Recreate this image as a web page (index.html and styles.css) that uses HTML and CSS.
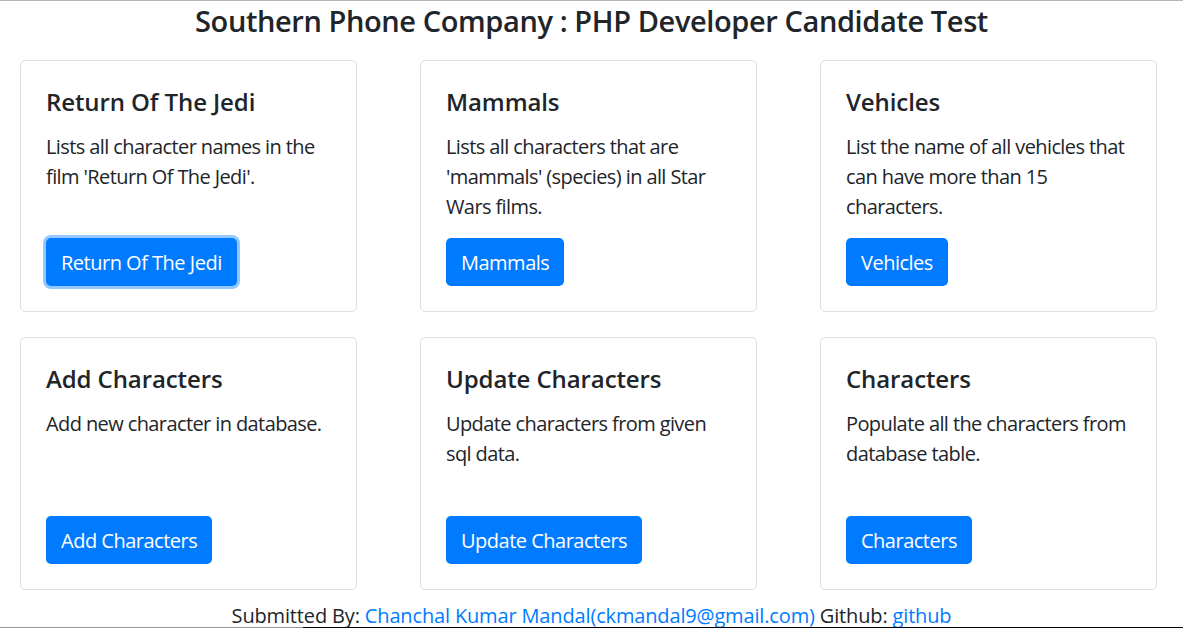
FILE: index.html
```html
<!DOCTYPE html>
<html lang="en">
<head>
<meta charset="utf-8">
<title>Southern Phone Company : PHP Developer Candidate Test</title>
<link rel="stylesheet" href="styles.css">
</head>
<body>
<div class="page">
  <h1 class="page-title">Southern Phone Company : PHP Developer Candidate Test</h1>
  <div class="cards">
    <div class="card">
      <h5 class="card-title">Return Of The Jedi</h5>
      <p class="card-text">Lists all character names in the film 'Return Of The Jedi'.</p>
      <a class="btn btn-focus" href="#">Return Of The Jedi</a>
    </div>
    <div class="card">
      <h5 class="card-title">Mammals</h5>
      <p class="card-text">Lists all characters that are 'mammals' (species) in all Star Wars films.</p>
      <a class="btn" href="#">Mammals</a>
    </div>
    <div class="card">
      <h5 class="card-title">Vehicles</h5>
      <p class="card-text">List the name of all vehicles that can have more than 15 characters.</p>
      <a class="btn" href="#">Vehicles</a>
    </div>
    <div class="card">
      <h5 class="card-title">Add Characters</h5>
      <p class="card-text">Add new character in database.</p>
      <a class="btn" href="#">Add Characters</a>
    </div>
    <div class="card">
      <h5 class="card-title">Update Characters</h5>
      <p class="card-text">Update characters from given sql data.</p>
      <a class="btn" href="#">Update Characters</a>
    </div>
    <div class="card">
      <h5 class="card-title">Characters</h5>
      <p class="card-text">Populate all the characters from database table.</p>
      <a class="btn" href="#">Characters</a>
    </div>
  </div>
  <p class="footer">Submitted By: <a href="#">Chanchal Kumar Mandal(ckmandal9@gmail.com)</a> Github: <a href="#">github</a></p>
</div>
<div class="bottom-line"></div>
</body>
</html>
```
FILE: styles.css
```css
html, body {
  margin: 0;
  padding: 0;
  height: 100%;
  overflow: hidden;
}
body {
  font-family: "Open Sans", "Noto Sans", sans-serif;
  font-size: 20px;
  line-height: 30px;
  color: #212529;
  background: #fff;
  border-top: 1px solid #b4b4b4;
  box-sizing: border-box;
  position: relative;
}
.page {
  display: flex;
  flex-direction: column;
  align-items: center;
}
.page-title {
  margin: 0;
  padding-top: 1px;
  font-size: 29px;
  line-height: 38px;
  font-weight: 600;
  text-align: center;
  width: 100%;
  letter-spacing: -0.4px;
}
.cards {
  margin-top: 20px;
  align-self: stretch;
  padding-left: 20px;
  display: grid;
  grid-template-columns: repeat(3, 337px);
  grid-template-rows: 252px 253px;
  column-gap: 63px;
  row-gap: 25px;
}
.card {
  border: 1px solid #dfdfdf;
  border-radius: 5px;
  padding: 26px 25px 25px;
  box-sizing: border-box;
  display: flex;
  flex-direction: column;
  align-items: flex-start;
}
.card-title {
  margin: 0 0 15px;
  font-size: 24px;
  line-height: 30px;
  font-weight: 600;
  letter-spacing: -0.1px;
}
.card-text {
  margin: 0;
  letter-spacing: -0.6px;
}
.btn {
  margin-top: auto;
  display: inline-block;
  background: #007bff;
  color: #fff;
  text-decoration: none;
  border-radius: 5px;
  padding: 10px 15px 8px;
  line-height: 30px;
  letter-spacing: -0.5px;
}
.btn-focus {
  box-shadow: 0 0 0 3px rgba(38, 143, 255, 0.5);
}
.footer {
  margin: 11px 0 0;
  letter-spacing: -0.15px;
}
.footer a {
  color: #007bff;
  text-decoration: none;
}
.bottom-line {
  position: absolute;
  left: 0;
  right: 0;
  bottom: 0;
  height: 1px;
  background: linear-gradient(to right, #9a9a9a 0, #9a9a9a 303px, #000 303px);
}
```
